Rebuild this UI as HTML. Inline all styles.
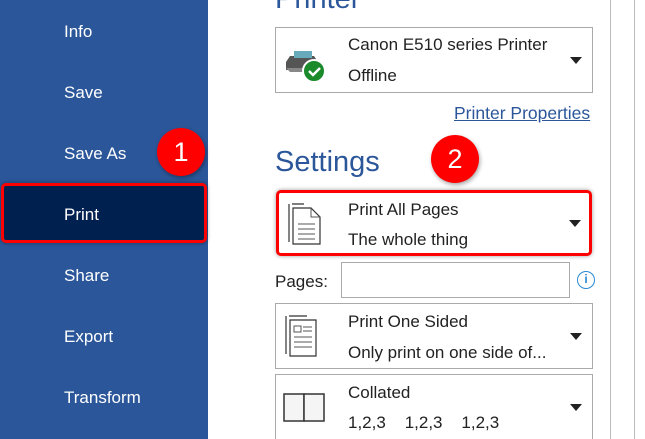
<!DOCTYPE html>
<html style="width:645px;height:439px;overflow:hidden"><head><style>
*{margin:0;padding:0;box-sizing:border-box}
body{width:645px;height:439px;overflow:hidden;background:#fff;font-family:"Liberation Sans",sans-serif;position:relative}
.side{position:absolute;left:0;top:0;width:208px;height:439px;background:#2b579a}
.it{position:absolute;left:64px;color:#fff;font-size:17px}
.print{position:absolute;left:1px;top:183px;width:206px;height:60px;background:#002050;border:3px solid #f00;border-radius:5px;box-shadow:0 0 4px rgba(0,0,0,.4)}
.badge{position:absolute;width:48px;height:48px;border-radius:50%;background:#f00;color:#fff;font-size:27px;text-align:center;line-height:48px;box-shadow:1px 2px 4px rgba(0,0,0,.35)}
.h{position:absolute;left:275px;color:#2b579a;font-size:29px}
.box{position:absolute;left:275px;width:318px;height:66px;border:1px solid #aaa;background:#fff}
.t{position:absolute;left:72px;font-size:17px;color:#222}
.arr{position:absolute;right:10px;top:29px;width:0;height:0;border-left:6px solid transparent;border-right:6px solid transparent;border-top:7px solid #222}
.vl{position:absolute;top:0;width:1px;height:439px;background:#bbb}
</style></head><body>
<div class="side">
<div class="it" style="top:22px">Info</div>
<div class="it" style="top:83px">Save</div>
<div class="it" style="top:144px">Save As</div>
<div class="print"></div>
<div class="it" style="top:205px">Print</div>
<div class="it" style="top:266px">Share</div>
<div class="it" style="top:327px">Export</div>
<div class="it" style="top:388px">Transform</div>
</div>
<div class="badge" style="left:157px;top:128px">1</div>
<div class="vl" style="left:610px"></div>
<div class="vl" style="left:634px"></div>
<div class="h" style="top:-17px">Printer</div>
<div class="box" style="top:27px">
<svg style="position:absolute;left:8px;top:18px" width="48" height="40" viewBox="0 0 48 40"><path d="M6 10h24l4 6v8H2v-8z" fill="#555"/><rect x="10" y="5" width="18" height="7" fill="#6ab"/><path d="M2 22h28v4H6z" fill="#888"/><circle cx="30" cy="25" r="11" fill="#1a8a2a" stroke="#fff" stroke-width="2"/><path d="M25 25l4 4 7-7" stroke="#fff" stroke-width="2.5" fill="none"/></svg>
<div class="t" style="top:7px">Canon E510 series Printer</div>
<div class="t" style="top:38px">Offline</div>
<div class="arr"></div></div>
<div style="position:absolute;left:454px;top:103px;font-size:17.5px;color:#2b579a;text-decoration:underline">Printer Properties</div>
<div class="h" style="top:146px">Settings</div>
<div class="badge" style="left:431px;top:135px">2</div>
<div class="box" style="top:190px;left:276px;width:316px;border:3px solid #f00;border-radius:5px;box-shadow:0 0 4px rgba(0,0,0,.4)">
<svg style="position:absolute;left:8px;top:9px" width="40" height="46" viewBox="0 0 40 46"><path d="M2 2v38M5 2h12" stroke="#333" fill="none" stroke-width="1.2"/><path d="M6 6h18l9 9v27H6z" fill="#fff" stroke="#333" stroke-width="1.2"/><path d="M24 6v9h9M11 22h17M11 27h17M11 32h17M11 37h17" stroke="#555" fill="none"/></svg>
<div class="t" style="top:7px;left:69px">Print All Pages</div>
<div class="t" style="top:37px;left:69px">The whole thing</div>
<div class="arr" style="right:8px;top:27px"></div></div>
<div style="position:absolute;left:275px;top:272px;font-size:17px;color:#222">Pages:</div>
<div style="position:absolute;left:341px;top:262px;width:229px;height:36px;border:1px solid #aaa"></div>
<div style="position:absolute;left:577px;top:271px;width:18px;height:18px;border:1.5px solid #2a8ad4;border-radius:50%;color:#2a8ad4;font-size:12px;font-weight:bold;text-align:center;line-height:15px">i</div>
<div class="box" style="top:303px">
<svg style="position:absolute;left:8px;top:10px" width="40" height="46" viewBox="0 0 40 46"><path d="M2 2v38M5 2h18" stroke="#333" fill="none" stroke-width="1.2"/><path d="M6 6h26v36H6z" fill="#fff" stroke="#333" stroke-width="1.2"/><path d="M10 12h7v6h-7zM19 13h9M19 17h9M10 23h18M10 28h18M10 33h18" stroke="#555" fill="none"/></svg>
<div class="t" style="top:8px">Print One Sided</div>
<div class="t" style="top:39px">Only print on one side of...</div>
<div class="arr"></div></div>
<div class="box" style="top:374px;height:65px;border-bottom:none">
<svg style="position:absolute;left:7px;top:18px" width="44" height="30" viewBox="0 0 44 30"><rect x="1" y="1" width="20" height="27" fill="#f5f5f5" stroke="#333" stroke-width="1.5"/><rect x="21" y="1" width="20" height="27" fill="#f5f5f5" stroke="#333" stroke-width="1.5"/></svg>
<div class="t" style="top:8px">Collated</div>
<div class="t" style="top:38px">1,2,3&nbsp;&nbsp;&nbsp;&nbsp;1,2,3&nbsp;&nbsp;&nbsp;&nbsp;1,2,3</div>
<div class="arr" style="top:29px"></div></div>
</body></html>
